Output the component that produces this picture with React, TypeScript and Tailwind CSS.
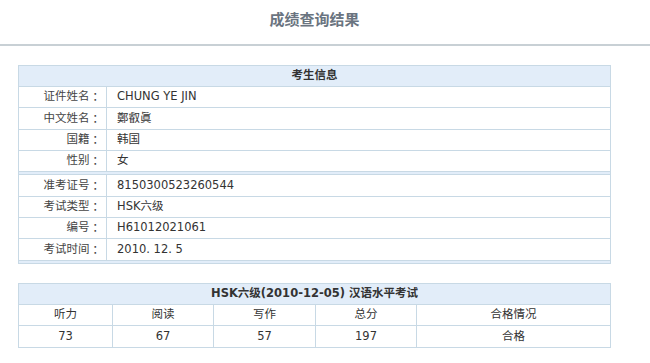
import React from "react";

const font = { fontFamily: '"DejaVu Sans", "Noto Sans CJK SC", sans-serif' };
const colonFont = { fontFamily: '"Noto Sans CJK JP", sans-serif' };

function InfoRow({ label, value, h }: { label: string; value: string; h: string }) {
  return (
    <div className={`flex border-b border-[#c8d9e5] ${h}`}>
      <div className="w-[88px] border-r border-[#c8d9e5] flex items-center justify-end pr-[5px] text-[#444]">
        {label}
        <span style={colonFont}>：</span>
      </div>
      <div className="flex-1 flex items-center pl-[10px] text-[#333]">{value}</div>
    </div>
  );
}

export default function App() {
  return (
    <div className="w-[650px] h-[363px] bg-white overflow-hidden text-[11.5px]" style={font}>
      <div className="h-[46px] border-b-2 border-[#c8d0d5] flex pt-[10px]">
        <div className="w-[629px] flex justify-center">
          <span className="text-[15px] font-bold text-[#6a7480] leading-[20px]">成绩查询结果</span>
        </div>
      </div>

      <div className="mt-[19px] ml-[18px] w-[593px] border border-[#c8d9e5]">
        <div className="h-[21px] bg-[#e2edf9] border-b border-[#c8d9e5] flex items-center justify-center font-bold text-[#333]">
          考生信息
        </div>
        <InfoRow label="证件姓名" value="CHUNG YE JIN" h="h-[21px]" />
        <InfoRow label="中文姓名" value="鄭叡眞" h="h-[22px]" />
        <InfoRow label="国籍" value="韩国" h="h-[21px]" />
        <InfoRow label="性别" value="女" h="h-[21px]" />
        <div className="h-[3px] bg-[#e2edf9] border-b border-[#c8d9e5]" />
        <InfoRow label="准考证号" value="8150300523260544" h="h-[22px]" />
        <InfoRow label="考试类型" value="HSK六级" h="h-[21px]" />
        <InfoRow label="编号" value="H61012021061" h="h-[21px]" />
        <InfoRow label="考试时间" value="2010. 12. 5" h="h-[22px]" />
        <div className="h-[2px] bg-[#e2edf9]" />
      </div>

      <div className="mt-[19px] ml-[18px] w-[593px] border border-[#c8d9e5] text-[#333]">
        <div className="h-[21px] bg-[#e2edf9] border-b border-[#c8d9e5] flex items-center justify-center font-bold">
          HSK六级(2010-12-05) 汉语水平考试
        </div>
        <div className="grid grid-cols-[94px_101px_102px_101px_1fr] h-[21px] border-b border-[#c8d9e5]">
          <div className="border-r border-[#c8d9e5] flex items-center justify-center">听力</div>
          <div className="border-r border-[#c8d9e5] flex items-center justify-center">阅读</div>
          <div className="border-r border-[#c8d9e5] flex items-center justify-center">写作</div>
          <div className="border-r border-[#c8d9e5] flex items-center justify-center">总分</div>
          <div className="flex items-center justify-center">合格情况</div>
        </div>
        <div className="grid grid-cols-[94px_101px_102px_101px_1fr] h-[21px]">
          <div className="border-r border-[#c8d9e5] flex items-center justify-center">73</div>
          <div className="border-r border-[#c8d9e5] flex items-center justify-center">67</div>
          <div className="border-r border-[#c8d9e5] flex items-center justify-center">57</div>
          <div className="border-r border-[#c8d9e5] flex items-center justify-center">197</div>
          <div className="flex items-center justify-center">合格</div>
        </div>
      </div>
    </div>
  );
}
